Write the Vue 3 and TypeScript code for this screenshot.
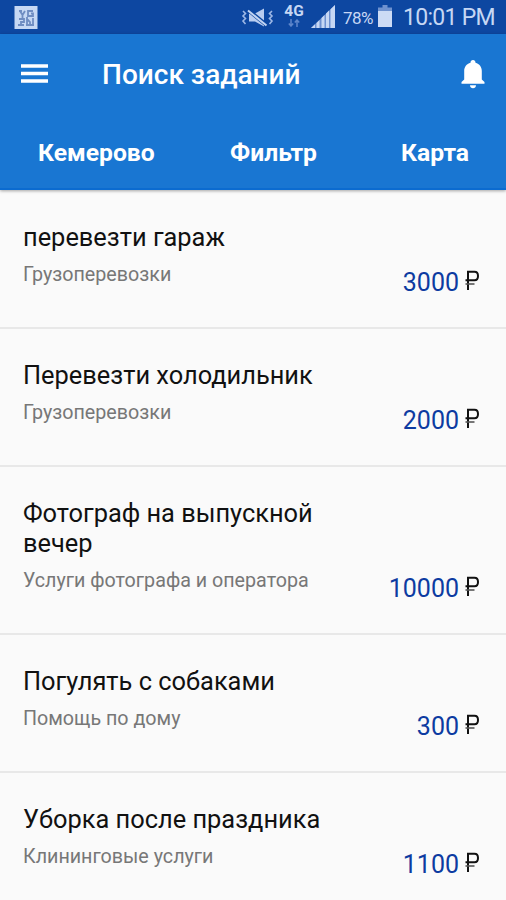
<script setup lang="ts">
interface Task {
  title: string
  category: string
  price: number
}

const tabs: string[] = ['Кемерово', 'Фильтр', 'Карта']

const tasks: Task[] = [
  { title: 'перевезти гараж', category: 'Грузоперевозки', price: 3000 },
  { title: 'Перевезти холодильник', category: 'Грузоперевозки', price: 2000 },
  { title: 'Фотограф на выпускной вечер', category: 'Услуги фотографа и оператора', price: 10000 },
  { title: 'Погулять с собаками', category: 'Помощь по дому', price: 300 },
  { title: 'Уборка после праздника', category: 'Клининговые услуги', price: 1100 },
]
</script>

<template>
  <div class="screen">
    <div class="status">
      <svg class="app-mark" width="24" height="24" viewBox="0 0 24 24">
        <rect x="0.500" y="1" width="23" height="23" fill="#c6d8f4" />
        <g fill="none" stroke="#6f8dc2" stroke-width="1.800">
          <path d="M5 6h3M6 6l2.500 4L11 6M8.500 10v3M19 6h-5v5h5V8.500h-2" />
          <path d="M5 14h5v3H7v3M4 20h6M13 12v8M13 14l3 3v3M19 13v7M12 20h8" />
        </g>
      </svg>
      <span class="spacer"></span>
      <svg class="mute" width="34" height="20" viewBox="0 0 34 20">
        <path d="M8 5.500h6l9-5v18l-9-5H8z" fill="#b9cdf0" />
        <path d="M6.500 1.500l19 15.500" stroke="#0d47a1" stroke-width="4" />
        <path d="M7 2.500l18.500 15" stroke="#c3d5f3" stroke-width="2" />
        <g fill="none" stroke="#9db8e6" stroke-width="1.600">
          <path d="M2 3l2.500 2.500L2 8l2.500 2.500L2 13l2.500 3" />
          <path d="M31 3l-2.500 2.500L31 8l-2.500 2.500L31 13l-2.500 3" />
        </g>
      </svg>
      <div class="network">
        <span class="network-label">4G</span>
        <svg width="12" height="8" viewBox="0 0 12 8">
          <path d="M3 0v7M.8 4.500L3 7l2.200-2.500M9 8V1M6.800 3.500L9 1l2.200 2.500" fill="none" stroke="#5f87cb" stroke-width="1.500" />
        </svg>
      </div>
      <svg class="signal" width="24" height="23" viewBox="0 0 24 23">
        <path d="M0 23L24 0v23z" fill="#6d90d0" />
        <g fill="#c6d7f4">
          <path d="M0 23l4-3.800V23z" />
          <path d="M5.500 18l3-3v8h-3zM10.500 13l3-3v13h-3zM15 8.600l3-3V23h-3zM19.500 4.300L24 0v23h-4.500z" />
        </g>
      </svg>
      <span class="percent">78%</span>
      <svg class="battery" width="14" height="23" viewBox="0 0 14 23">
        <path d="M4.500 1h5v2.500H14V8H0V3.500h4.500z" fill="#6f92cf" />
        <path d="M0 7h14v16H0z" fill="#ccdbf5" />
      </svg>
      <span class="clock">10:01 PM</span>
    </div>

    <header class="header">
      <div class="toolbar">
        <svg class="menu" width="27" height="20" viewBox="0 0 27 20">
          <path d="M0 2h27M0 9.500h27M0 17h27" stroke="#fff" stroke-width="3.400" />
        </svg>
        <h1 class="heading">Поиск заданий</h1>
        <svg class="bell" width="24" height="29" viewBox="0 0 24 29">
          <path d="M12 0c1.500 0 2.500 1 2.500 2.700C18.500 3.700 20.800 7 20.800 11v8.500L23.500 22v1.700H.5V22l2.700-2.500V11c0-4 2.300-7.300 6.300-8.300C9.500 1 10.500 0 12 0z" fill="#fff" />
          <path d="M9 25.300h6c0 1.700-1.300 3-3 3s-3-1.300-3-3z" fill="#fff" />
        </svg>
      </div>
      <nav class="tabs">
        <span v-for="tab in tabs" :key="tab" class="tab">{{ tab }}</span>
      </nav>
    </header>

    <main class="list">
      <article v-for="task in tasks" :key="task.title" class="task">
        <div class="info">
          <h2 class="title">{{ task.title }}</h2>
          <p class="category">{{ task.category }}</p>
        </div>
        <div class="price">
          <span class="amount">{{ task.price }}</span>
          <svg class="ruble" width="15" height="20" viewBox="0 0 15 20" role="img">
            <path d="M3 20V1.700H9.500q3.500 0 3.500 4.300t-3.500 4.300H0.500" fill="none" stroke="#111" stroke-width="2" />
            <path d="M0.500 14h9" stroke="#555" stroke-width="1.600" />
          </svg>
        </div>
      </article>
    </main>
  </div>
</template>

<style>
body {
  margin: 0;
  background: #fafafa;
}
</style>

<style scoped>
.screen {
  width: 506px;
  height: 900px;
  overflow: hidden;
  background: #fafafa;
  font-family: Roboto, 'Liberation Sans', sans-serif;
}
.status {
  display: flex;
  align-items: flex-start;
  box-sizing: border-box;
  height: 34px;
  padding: 0 11px 0 14px;
  background: #0d47a1;
  color: #c6d7f4;
}
.app-mark {
  margin-top: 5px;
}
.spacer {
  flex: 1;
}
.mute {
  margin-top: 8px;
}
.network {
  display: flex;
  flex-direction: column;
  align-items: center;
  width: 20px;
  margin: 3px 0 0 9px;
}
.network-label {
  font-size: 15.5px;
  font-weight: 700;
  line-height: 16px;
}
.signal {
  margin: 5px 0 0 7px;
}
.percent {
  width: 32px;
  margin: 8px 0 0 8px;
  font-size: 17px;
  line-height: 20px;
  letter-spacing: -0.5px;
}
.battery {
  margin: 4px 0 0 3px;
}
.clock {
  width: 92px;
  margin: 4px 0 0 11px;
  font-size: 23px;
  line-height: 28px;
  letter-spacing: -0.7px;
  white-space: nowrap;
}
.header {
  position: relative;
  box-sizing: border-box;
  height: 156px;
  background: #1976d2;
  color: #fff;
  border-bottom: 2px solid #0b6bd0;
  box-shadow: 0 1px 3px rgba(0, 0, 0, 0.35);
}
.toolbar {
  display: flex;
  align-items: center;
  height: 80px;
  padding: 0 21px;
}
.heading {
  flex: 1;
  margin: 1px 0 0 54px;
  font-size: 28px;
  font-weight: 500;
  line-height: 32px;
}
.tabs {
  display: grid;
  grid-template-columns: 192px 1fr auto;
  padding: 25px 37px 0 38px;
}
.tab {
  font-size: 24.7px;
  font-weight: 700;
  line-height: 28px;
}
.list {
  padding-top: 1px;
}
.task {
  display: flex;
  justify-content: space-between;
  align-items: flex-end;
  padding: 31px 26px 28px 23px;
  border-bottom: 2px solid #e8e8e8;
}
.info {
  width: 310px;
}
.title {
  margin: 0;
  font-size: 25.4px;
  font-weight: 400;
  line-height: 30px;
  color: #111;
}
.category {
  margin: 11px 0 12px;
  font-size: 19.7px;
  line-height: 24px;
  color: #777;
}
.price {
  display: flex;
  align-items: flex-start;
  gap: 6px;
  height: 31px;
}
.amount {
  font-size: 25px;
  line-height: 30px;
  color: #0d3ba1;
}
.ruble {
  margin-top: 2px;
}
</style>
